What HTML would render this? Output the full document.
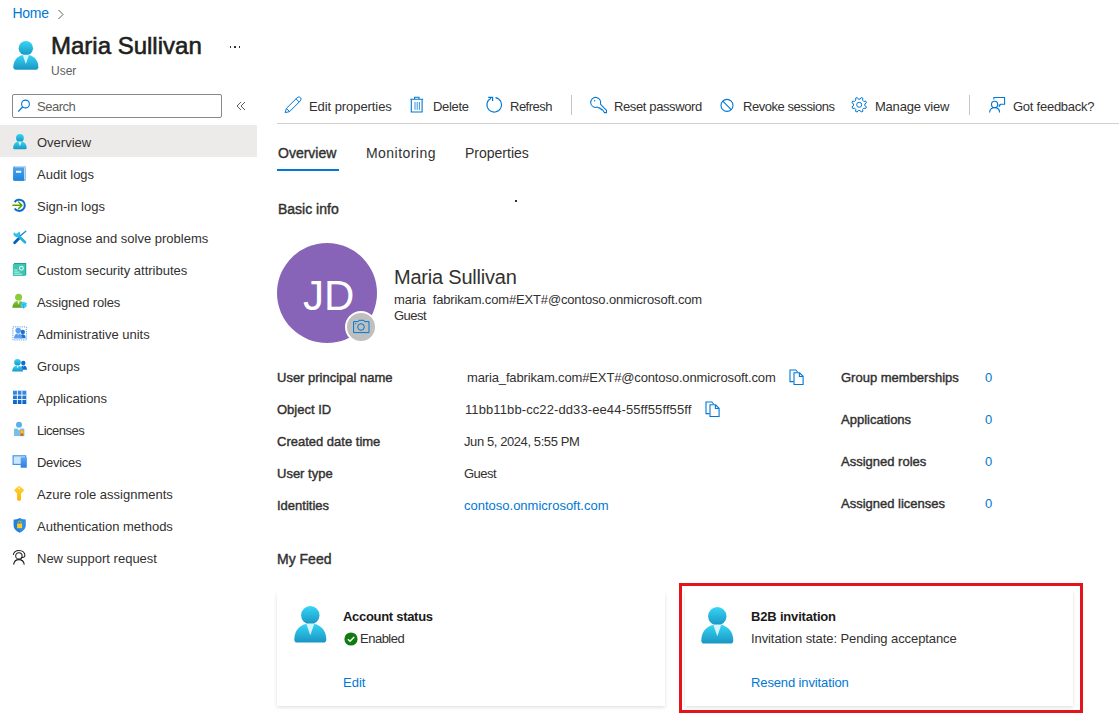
<!DOCTYPE html>
<html><head><meta charset="utf-8">
<style>
html,body{margin:0;padding:0;width:1119px;height:721px;overflow:hidden;background:#fff;position:relative;font-family:"Liberation Sans",sans-serif;color:#323130}
.t{position:absolute;white-space:nowrap;line-height:1;font-size:13px}
.b{-webkit-text-stroke:0.4px currentColor}
.bb{font-weight:bold;color:#1b1a19}
.lk{color:#0078d4}
.ab{position:absolute}
svg{position:absolute;overflow:visible}
</style></head><body>

<svg width="0" height="0" style="left:0;top:0">
 <defs>
  <linearGradient id="pg" x1="0" y1="0" x2="0" y2="1"><stop offset="0" stop-color="#36d6f7"/><stop offset="1" stop-color="#1a95c2"/></linearGradient>
  <symbol id="person" viewBox="0 0 33 37">
   <path d="M0.3 33.5 C0.3 23.5 7 17.4 16.3 17.4 C25.6 17.4 32.3 23.5 32.3 33.5 Q32.3 36.6 29.5 36.6 L3.1 36.6 Q0.3 36.6 0.3 33.5 Z" fill="url(#pg)"/>
   <circle cx="16.3" cy="9.2" r="9.2" fill="url(#pg)"/>
   <path d="M12.2 17.6 L20.4 17.6 L16.3 29.3 Z" fill="#d4f5fd"/>
  </symbol>
 </defs>
</svg>
<!-- breadcrumb -->
<div class="t lk" style="left:12.5px;top:6px;font-size:14px;letter-spacing:-0.3px">Home</div>
<svg style="left:57px;top:9px" width="8" height="11" viewBox="0 0 8 11"><path d="M1.5 1 L6 5.5 L1.5 10" fill="none" stroke="#605e5c" stroke-width="1"/></svg>

<!-- header icon -->
<svg style="left:13px;top:40.7px" width="26" height="29"><use href="#person"/></svg>
<div class="t b" style="left:51px;top:34px;color:#201f1e;font-size:24px;-webkit-text-stroke:0.6px #201f1e">Maria Sullivan</div>
<div class="t" style="left:51px;top:65px;font-size:12px;color:#605e5c">User</div>
<div class="ab" style="left:229.8px;top:46px;width:1.6px;height:1.6px;background:#323130"></div><div class="ab" style="left:234.3px;top:46px;width:1.6px;height:1.6px;background:#323130"></div><div class="ab" style="left:238.8px;top:46px;width:1.6px;height:1.6px;background:#323130"></div>

<!-- search -->
<div class="ab" style="left:12px;top:94px;width:208px;height:22px;border:1px solid #8a8886;border-radius:2px"></div>
<svg style="left:17px;top:98px" width="14" height="14" viewBox="0 0 14 14"><circle cx="8.5" cy="6" r="3.9" fill="none" stroke="#0078d4" stroke-width="1.1"/><path d="M5.8 8.8 L1.2 13.6" stroke="#0078d4" stroke-width="1.3"/></svg>
<div class="t" style="left:37px;top:100px;color:#605e5c;letter-spacing:-0.5px">Search</div>
<svg style="left:236px;top:101px" width="10" height="10" viewBox="0 0 10 10"><path d="M5 1 L1 5 L5 9 M9 1 L5 5 L9 9" fill="none" stroke="#605e5c" stroke-width="1"/></svg>

<!-- nav -->
<div class="ab" style="left:0;top:125px;width:257px;height:32px;background:#edebe9"></div>
<!-- nav icons -->
<svg style="left:12.5px;top:133.5px" width="14" height="15.6"><use href="#person"/></svg>
<svg style="left:12px;top:165px" width="16" height="17" viewBox="0 0 16 17">
 <defs><linearGradient id="bk" x1="0" y1="0" x2="0" y2="1"><stop offset="0" stop-color="#4aa3ee"/><stop offset="1" stop-color="#1b85dc"/></linearGradient></defs>
 <rect x="1.2" y="0.9" width="12.6" height="14.9" rx="1.6" fill="#5b9ad8"/>
 <path d="M2.6 1.8 H12.2 Q12.8 1.8 12.8 2.4 V14.6" fill="none" stroke="#e8f3fc" stroke-width="1"/>
 <path d="M1.2 3 H12 V15.8 H2.6 Q1.2 15.8 1.2 14.4 Z" fill="url(#bk)"/>
 <rect x="4" y="5.8" width="5.2" height="1.9" fill="#fff"/>
</svg>
<svg style="left:12px;top:197px" width="16" height="16" viewBox="0 0 16 16">
 <path d="M2.6 5.1 A5.6 5.6 0 1 1 2.6 11.5" fill="none" stroke="#0a6cd0" stroke-width="2"/>
 <path d="M0.9 8.3 L10 8.3 M6.6 5 L10 8.3 L6.6 11.6" fill="none" stroke="#57a300" stroke-width="1.5" stroke-linecap="round" stroke-linejoin="round"/>
</svg>
<svg style="left:12px;top:229px" width="16" height="16" viewBox="0 0 16 16">
 <path d="M7.5 7.5 L13.8 2.2" stroke="#1a8ad0" stroke-width="1.3" stroke-linecap="round"/>
 <path d="M2.6 13.8 L6.8 9.6" stroke="#0b5fb8" stroke-width="2.8" stroke-linecap="round"/>
 <path d="M6 6.5 L13 13.3" stroke="#22aede" stroke-width="2.6" stroke-linecap="round"/>
 <path d="M2 3.2 A3.3 3.3 0 1 0 7.2 2.4 L5.2 4.6 L3.6 4.4 Z" fill="#30c0ec"/>
</svg>
<svg style="left:12px;top:261px" width="16" height="16" viewBox="0 0 16 16">
 <rect x="2" y="2" width="12.2" height="12.2" fill="#1f9c8b"/>
 <rect x="0.9" y="2.9" width="12.5" height="12.1" fill="#3cc6b3"/>
 <circle cx="9.4" cy="7.3" r="1.9" fill="none" stroke="#e6fbf7" stroke-width="1.1"/>
 <path d="M2.2 9 H5.5 M2.2 11.1 H7.5 M2.2 13.2 H10" stroke="#c9f1ea" stroke-width="1"/>
</svg>
<svg style="left:12px;top:293px" width="16" height="16" viewBox="0 0 16 16">
 <defs><linearGradient id="gr" x1="0" y1="0" x2="0" y2="1"><stop offset="0" stop-color="#8fcc3a"/><stop offset="1" stop-color="#5b9f1c"/></linearGradient></defs>
 <circle cx="6.6" cy="4.3" r="3.5" fill="#8ccb3a"/>
 <path d="M0.4 14.7 C0.4 10.5 3 7.7 6.6 7.7 C10 7.7 12 10 12 12 L12 14.7 Z" fill="url(#gr)"/>
 <path d="M5.3 7.8 H7.8 L6.6 11.8 Z" fill="#f0f8e4"/>
 <path d="M11.6 8.5 L14.6 10.2 L14.6 13.6 L11.6 15.4 L8.6 13.6 L8.6 10.2 Z" fill="#3fd0f4"/>
 <path d="M8.6 10.2 L11.6 11.9 L14.6 10.2 M11.6 11.9 V15.4" fill="none" stroke="#1aa0dc" stroke-width="0.6"/>
</svg>
<svg style="left:12px;top:325px" width="16" height="16" viewBox="0 0 16 16">
 <rect x="0.9" y="1.9" width="13.5" height="13" fill="none" stroke="#5b9fe6" stroke-width="1" stroke-dasharray="1.2 1"/>
 <circle cx="10.8" cy="6.9" r="2.2" fill="#1a6fd0"/>
 <path d="M8 13.2 C8 10.5 9 9.2 10.8 9.2 C12.6 9.2 13.6 10.5 13.6 13.2 Z" fill="#1a6fd0"/>
 <circle cx="6.2" cy="5.6" r="2.8" fill="#5b9ff0"/>
 <path d="M2 13.6 C2 10 3.5 8.4 6.2 8.4 C8.9 8.4 10.4 10 10.4 13.6 Z" fill="#5b9ff0"/>
 <path d="M5.2 8.8 H7.2 L6.2 10.2 Z" fill="#d8e9fb"/>
</svg>
<svg style="left:12px;top:357px" width="16" height="16" viewBox="0 0 16 16">
 <circle cx="11.3" cy="6" r="2.2" fill="#0f6cd6"/>
 <path d="M8.6 12.8 C8.6 10 10 8.6 11.6 8.6 C13.4 8.6 15 10 15 12.8 Z" fill="#0f6cd6"/>
 <path d="M10.9 8.7 H12.1 L11.5 10.2Z" fill="#bcd9f7"/>
 <circle cx="5.5" cy="5.2" r="3.3" fill="url(#pg)"/>
 <path d="M0.2 14.6 C0.2 10.8 2.4 8.6 5.6 8.6 C8.8 8.6 11 10.8 11 14.6 Z" fill="url(#pg)"/>
 <path d="M4.5 8.7 H6.7 L5.6 11.5Z" fill="#d4f5fd"/>
</svg>
<svg style="left:12px;top:389px" width="16" height="16" viewBox="0 0 16 16">
 <defs><linearGradient id="ap" x1="0" y1="0" x2="0" y2="1"><stop offset="0" stop-color="#3a8de6"/><stop offset="1" stop-color="#0b62c7"/></linearGradient></defs>
 <rect x="1" y="1.7" width="13.3" height="13.3" fill="url(#ap)"/>
 <path d="M5.4 1.7 V15 M9.9 1.7 V15 M1 6.1 H14.3 M1 10.5 H14.3" stroke="#fff" stroke-width="0.9"/>
</svg>
<svg style="left:12px;top:421px" width="16" height="16" viewBox="0 0 16 16">
 <circle cx="7" cy="3.7" r="3" fill="#5bb1e3"/>
 <path d="M2 15 V8.6 Q2 7.6 3 7.6 H5.4 L7 9.6 L8.6 7.6 H11.4 Q12.4 7.6 12.4 8.6 V15 Z" fill="#79c0e8"/>
 <path d="M8.8 11.8 L8.4 15.6 L9.9 14.6 L11.4 15.6 L11 11.8 Z" fill="#e05a00"/>
 <circle cx="9.9" cy="10.8" r="2.1" fill="#f7a11a"/>
 <circle cx="9.9" cy="10.8" r="1.1" fill="#ffc83d"/>
</svg>
<svg style="left:12px;top:453px" width="16" height="16" viewBox="0 0 16 16">
 <defs><linearGradient id="tb" x1="0" y1="0" x2="0" y2="1"><stop offset="0" stop-color="#62a6f2"/><stop offset="1" stop-color="#2a7ee0"/></linearGradient></defs>
 <rect x="1.1" y="2.8" width="12.6" height="8.6" fill="#cde6fa" stroke="#3a8ee6" stroke-width="1.1"/>
 <rect x="8.7" y="4.3" width="6.1" height="10.4" fill="url(#tb)"/>
</svg>
<svg style="left:12px;top:485px" width="16" height="16" viewBox="0 0 16 16">
 <defs><linearGradient id="ky" x1="0" y1="0" x2="0" y2="1"><stop offset="0" stop-color="#ffd43a"/><stop offset="1" stop-color="#ffb000"/></linearGradient></defs>
 <path d="M6.2 1.2 Q7.1 0.6 8 1.2 L11.6 4.4 Q12.2 5.2 11.6 6 L9 8.6 V15 L7.1 15.9 L5.1 15 V8.6 L2.6 6 Q2 5.2 2.6 4.4 Z" fill="url(#ky)"/>
 <ellipse cx="7.1" cy="3.3" rx="1" ry="0.8" fill="#fff7d6"/>
</svg>
<svg style="left:12px;top:517px" width="16" height="16" viewBox="0 0 16 16">
 <path d="M7.6 1 C9.6 2.2 11.6 2.6 13.6 2.6 L13.6 8.6 C13.6 12 11 14.2 7.6 15.8 C4.2 14.2 1.6 12 1.6 8.6 L1.6 2.6 C3.6 2.6 5.6 2.2 7.6 1 Z" fill="#1f82e3"/>
 <path d="M7.6 1 C9.6 2.2 11.6 2.6 13.6 2.6 L13.6 8.6 C13.6 12 11 14.2 7.6 15.8 Z" fill="#3a95ee" opacity="0.6"/>
 <rect x="5.1" y="6.6" width="5" height="4.6" fill="#ffcb1f"/>
 <path d="M6.1 6.6 V5.6 A1.5 1.5 0 0 1 9.1 5.6 V6.6" fill="none" stroke="#f2b800" stroke-width="1"/>
</svg>
<svg style="left:12px;top:549px" width="16" height="16" viewBox="0 0 16 16">
 <circle cx="6.9" cy="6.9" r="3.2" fill="none" stroke="#201f1e" stroke-width="1.05"/>
 <path d="M1.6 15.6 C2 12.6 4.2 10.6 6.9 10.6 C9.6 10.6 11.8 12.6 12.3 15.6" fill="none" stroke="#201f1e" stroke-width="1.05"/>
 <path d="M1.3 5.8 C1.8 3 4 1.4 7 1.4 C10.5 1.4 12.9 3.6 12.9 6.6 C12.9 8 11.6 8.8 8.8 8.8" fill="none" stroke="#201f1e" stroke-width="1.05"/>
</svg>

<div class="t" style="left:37px;top:136px">Overview</div>
<div class="t" style="left:37px;top:168px">Audit logs</div>
<div class="t" style="left:37px;top:200px">Sign-in logs</div>
<div class="t" style="left:37px;top:232px">Diagnose and solve problems</div>
<div class="t" style="left:37px;top:264px">Custom security attributes</div>
<div class="t" style="left:37px;top:296px;letter-spacing:-0.15px">Assigned roles</div>
<div class="t" style="left:37px;top:328px">Administrative units</div>
<div class="t" style="left:37px;top:360px">Groups</div>
<div class="t" style="left:37px;top:392px">Applications</div>
<div class="t" style="left:37px;top:424px;letter-spacing:-0.5px">Licenses</div>
<div class="t" style="left:37px;top:456px;letter-spacing:-0.3px">Devices</div>
<div class="t" style="left:37px;top:488px">Azure role assignments</div>
<div class="t" style="left:37px;top:520px">Authentication methods</div>
<div class="t" style="left:37px;top:552px">New support request</div>

<!-- toolbar icons -->
<svg style="left:284px;top:96px" width="18" height="18" viewBox="0 0 18 18">
 <path d="M1.2 16.6 L2.4 12.4 L13 1.8 C14 0.8 15.6 0.8 16.4 1.6 C17.2 2.4 17.2 4 16.2 5 L5.6 15.6 Z" fill="none" stroke="#0078d4" stroke-width="1"/>
 <path d="M12 2.8 L15.2 6 M2.4 12.4 L5.6 15.6" fill="none" stroke="#0078d4" stroke-width="1"/>
</svg>
<svg style="left:409px;top:96px" width="16" height="18" viewBox="0 0 16 18">
 <path d="M1.3 3.2 H14.2 M5.6 3.2 V1.2 H10 V3.2" fill="none" stroke="#0078d4" stroke-width="1.1"/>
 <path d="M2.3 3.2 V16 H13.1 V3.2" fill="none" stroke="#0078d4" stroke-width="1.1"/>
 <path d="M6 6 V13.8 M8.2 6 V13.8 M10.4 6 V13.8" stroke="#0078d4" stroke-width="0.8"/>
</svg>
<svg style="left:485px;top:96px" width="18" height="18" viewBox="0 0 18 18">
 <path d="M10.5 1.6 A7.3 7.3 0 1 1 6.1 2.2" fill="none" stroke="#0078d4" stroke-width="1.1"/>
 <path d="M3.2 1.3 H7.6 V4.9" fill="none" stroke="#0078d4" stroke-width="1.2"/>
</svg>
<svg style="left:588px;top:95px" width="20" height="20" viewBox="0 0 20 20">
 <path d="M12.4 9.1 A5 5 0 1 0 9.4 12.1 L10.8 13.1 L11.7 12.7 L12.2 13.9 L13.2 13.7 L13.6 14.9 L14.6 14.8 L16.3 17.6 L18.5 17.6 L18.5 15.3 Z" fill="none" stroke="#0078d4" stroke-width="1.05" stroke-linejoin="round"/>
 <circle cx="6.6" cy="5.8" r="0.75" fill="#0078d4"/>
</svg>
<svg style="left:719px;top:97px" width="16" height="16" viewBox="0 0 16 16">
 <circle cx="8" cy="8.4" r="6" fill="none" stroke="#0078d4" stroke-width="1.1"/>
 <path d="M3.8 4.2 L12.2 12.6" stroke="#0078d4" stroke-width="1.1"/>
</svg>
<svg style="left:850px;top:96px" width="18" height="18" viewBox="0 0 18 18">
 <path d="M10.09 3.17 L11.18 1.57 L12.92 2.29 L12.55 4.19 L13.81 5.45 L15.71 5.08 L16.43 6.82 L14.83 7.91 L14.83 9.69 L16.43 10.78 L15.71 12.52 L13.81 12.15 L12.55 13.41 L12.92 15.31 L11.18 16.03 L10.09 14.43 L8.31 14.43 L7.22 16.03 L5.48 15.31 L5.85 13.41 L4.59 12.15 L2.69 12.52 L1.97 10.78 L3.57 9.69 L3.57 7.91 L1.97 6.82 L2.69 5.08 L4.59 5.45 L5.85 4.19 L5.48 2.29 L7.22 1.57 L8.31 3.17 Z" fill="none" stroke="#0078d4" stroke-width="1" stroke-linejoin="round"/>
 <circle cx="9.2" cy="8.8" r="2.5" fill="none" stroke="#0078d4" stroke-width="1"/>
</svg>
<svg style="left:988px;top:96px" width="18" height="18" viewBox="0 0 18 18">
 <circle cx="6.6" cy="8.4" r="3.1" fill="none" stroke="#0078d4" stroke-width="1.1"/>
 <path d="M1.6 16.6 C1.6 13.4 3.8 11.6 6.6 11.6 C9.4 11.6 11.6 13.4 11.6 16.6" fill="none" stroke="#0078d4" stroke-width="1.1"/>
 <path d="M5.9 3.6 V1.5 H16.6 V8.2 H12.6 L11.1 10.6 L11.4 8.4" fill="none" stroke="#0078d4" stroke-width="1.1"/>
</svg>
<!-- copy icons -->
<svg style="left:789px;top:369px" width="16" height="17" viewBox="0 0 16 17">
 <path d="M4.6 12.6 H1 V1 H6.8 L8.6 3" fill="none" stroke="#0078d4" stroke-width="1.1"/>
 <path d="M5 3.8 H10.6 L14.1 7.3 V15.5 H5 Z M10.4 3.8 V7.5 H14.1" fill="none" stroke="#0078d4" stroke-width="1.1"/>
</svg>
<svg style="left:705px;top:401px" width="16" height="17" viewBox="0 0 16 17">
 <path d="M4.6 12.6 H1 V1 H6.8 L8.6 3" fill="none" stroke="#0078d4" stroke-width="1.1"/>
 <path d="M5 3.8 H10.6 L14.1 7.3 V15.5 H5 Z M10.4 3.8 V7.5 H14.1" fill="none" stroke="#0078d4" stroke-width="1.1"/>
</svg>
<!-- toolbar -->
<div class="t" style="left:309px;top:100px;letter-spacing:-0.07px">Edit properties</div>
<div class="t" style="left:433px;top:100px;letter-spacing:-0.34px">Delete</div>
<div class="t" style="left:510px;top:100px;letter-spacing:-0.5px">Refresh</div>
<div class="ab" style="left:571px;top:95px;width:1px;height:20px;background:#c8c6c4"></div>
<div class="t" style="left:614px;top:100px;letter-spacing:-0.38px">Reset password</div>
<div class="t" style="left:743px;top:100px;letter-spacing:-0.45px">Revoke sessions</div>
<div class="t" style="left:875px;top:100px;letter-spacing:-0.22px">Manage view</div>
<div class="ab" style="left:969px;top:95px;width:1px;height:20px;background:#c8c6c4"></div>
<div class="t" style="left:1013px;top:100px;letter-spacing:-0.25px">Got feedback?</div>
<div class="ab" style="left:277px;top:123px;width:842px;height:1px;background:#d2d0ce"></div>

<!-- tabs -->
<div class="t b" style="left:278px;top:146px;font-size:14px">Overview</div>
<div class="t" style="left:366px;top:146px;font-size:14px;letter-spacing:0.45px">Monitoring</div>
<div class="t" style="left:465px;top:146px;font-size:14px">Properties</div>
<div class="ab" style="left:277px;top:169px;width:62px;height:2px;background:#0078d4"></div>

<div class="t b" style="left:278px;top:202px;font-size:14px">Basic info</div>
<div class="ab" style="left:515px;top:200px;width:2px;height:2px;background:#323130"></div>

<!-- avatar -->
<div class="ab" style="left:277px;top:243px;width:100px;height:100px;border-radius:50%;background:#8764b8"></div>
<div class="t" style="left:303px;top:275px;font-size:42px;color:#fff">JD</div>
<div class="ab" style="left:345px;top:310.5px;width:28px;height:28px;border-radius:50%;background:#bfbfbf;border:2px solid #fff"></div>
<svg style="left:352px;top:319px" width="18" height="15" viewBox="0 0 18 15">
 <path d="M1.6 2.6 H6.3 L6.8 1.3 H12 L12.5 2.6 H17 V13.6 H1.6 Z" fill="none" stroke="#0078d4" stroke-width="1"/>
 <circle cx="9" cy="8" r="3.3" fill="none" stroke="#0078d4" stroke-width="1"/>
 <circle cx="3.7" cy="4.6" r="0.6" fill="#0078d4"/>
</svg>

<div class="t" style="left:394px;top:267px;font-size:20px;letter-spacing:-0.21px">Maria Sullivan</div>
<div class="t" style="left:394px;top:293px;letter-spacing:-0.15px">maria&nbsp; fabrikam.com#EXT#@contoso.onmicrosoft.com</div>
<div class="t" style="left:394px;top:309px;letter-spacing:-0.5px">Guest</div>

<!-- properties -->
<div class="t b" style="left:277px;top:371px">User principal name</div>
<div class="t b" style="left:277px;top:403px">Object ID</div>
<div class="t b" style="left:277px;top:435px">Created date time</div>
<div class="t b" style="left:277px;top:467px">User type</div>
<div class="t b" style="left:277px;top:499px">Identities</div>
<div class="t" style="left:467px;top:371px;letter-spacing:-0.14px">maria_fabrikam.com#EXT#@contoso.onmicrosoft.com</div>
<div class="t" style="left:465px;top:403px;letter-spacing:0.1px">11bb11bb-cc22-dd33-ee44-55ff55ff55ff</div>
<div class="t" style="left:464px;top:435px;letter-spacing:-0.41px">Jun 5, 2024, 5:55 PM</div>
<div class="t" style="left:464px;top:467px;letter-spacing:-0.5px">Guest</div>
<div class="t lk" style="left:464px;top:499px">contoso.onmicrosoft.com</div>

<div class="t b" style="left:841px;top:371px">Group memberships</div>
<div class="t b" style="left:841px;top:413px">Applications</div>
<div class="t b" style="left:841px;top:455px">Assigned roles</div>
<div class="t b" style="left:841px;top:497px">Assigned licenses</div>
<div class="t lk" style="left:985px;top:371px">0</div>
<div class="t lk" style="left:985px;top:413px">0</div>
<div class="t lk" style="left:985px;top:455px">0</div>
<div class="t lk" style="left:985px;top:497px">0</div>

<div class="t b" style="left:277px;top:552px;font-size:14px">My Feed</div>

<!-- cards -->
<div class="ab" style="left:277px;top:592px;width:388px;height:114px;background:#fff;box-shadow:0 1.6px 3.6px rgba(0,0,0,.13),0 .3px .9px rgba(0,0,0,.11)"></div>
<div class="ab" style="left:685px;top:591px;width:388px;height:115px;background:#fff;box-shadow:0 1.6px 3.6px rgba(0,0,0,.13),0 .3px .9px rgba(0,0,0,.11)"></div>
<div class="ab" style="left:679px;top:583px;width:398px;height:124px;border:3px solid #e3141b"></div>

<svg style="left:293.5px;top:606.4px" width="33" height="37"><use href="#person"/></svg>
<svg style="left:701.3px;top:606.6px" width="33" height="37"><use href="#person"/></svg>
<svg style="left:343.5px;top:631.5px" width="14" height="14" viewBox="0 0 14 14">
 <circle cx="7" cy="7" r="6.6" fill="#107c10"/>
 <path d="M3.9 7.2 L6 9.2 L10.2 5" fill="none" stroke="#fff" stroke-width="1.5"/>
</svg>
<div class="t bb" style="left:343px;top:610px;letter-spacing:-0.3px">Account status</div>
<div class="t" style="left:360px;top:632px;letter-spacing:-0.5px">Enabled</div>
<div class="t lk" style="left:343px;top:676px">Edit</div>
<div class="t bb" style="left:751px;top:610px;letter-spacing:-0.18px">B2B invitation</div>
<div class="t" style="left:751px;top:632px;letter-spacing:-0.09px">Invitation state: Pending acceptance</div>
<div class="t lk" style="left:751px;top:676px;letter-spacing:-0.12px">Resend invitation</div>

</body></html>
